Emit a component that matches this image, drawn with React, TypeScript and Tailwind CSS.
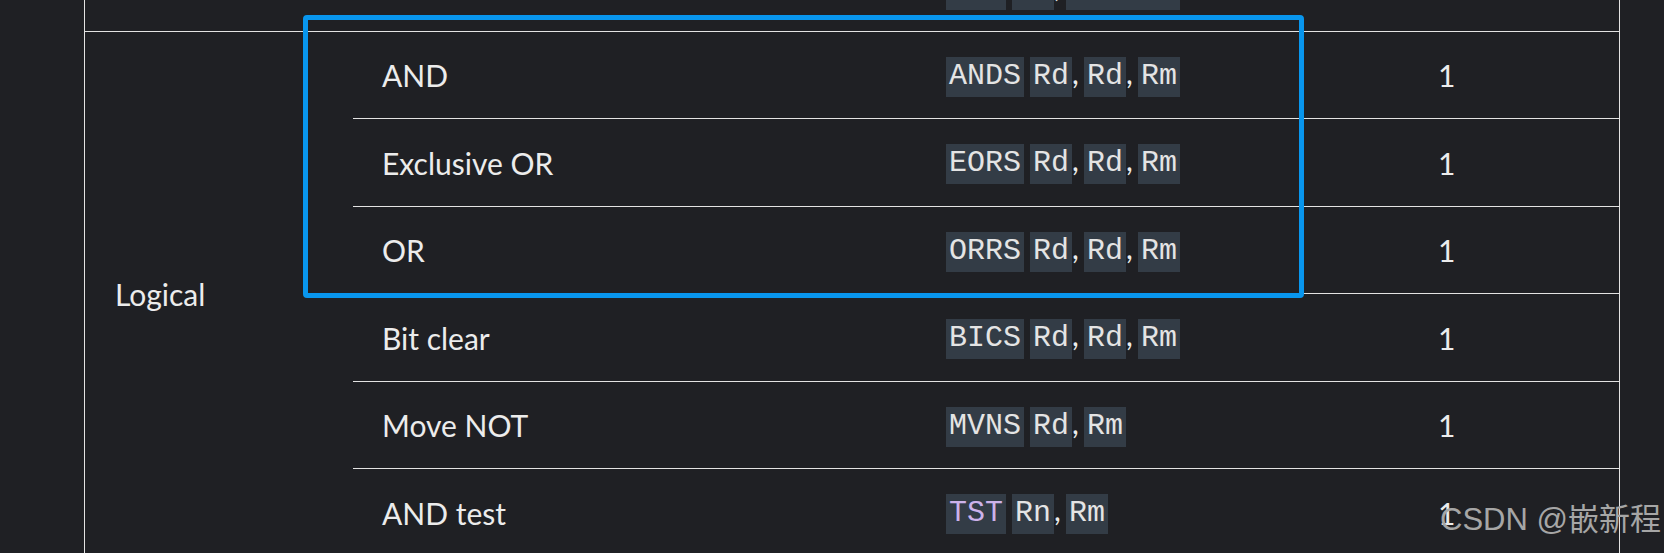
import React from "react";

type Row = { op: string; instr: string; ops: string[]; purple?: boolean; h: string; top: boolean };

const rows: Row[] = [
  { op: "AND", instr: "ANDS", ops: ["Rd", "Rd", "Rm"], h: "h-[86px]", top: false },
  { op: "Exclusive OR", instr: "EORS", ops: ["Rd", "Rd", "Rm"], h: "h-[88px]", top: true },
  { op: "OR", instr: "ORRS", ops: ["Rd", "Rd", "Rm"], h: "h-[87px]", top: true },
  { op: "Bit clear", instr: "BICS", ops: ["Rd", "Rd", "Rm"], h: "h-[88px]", top: true },
  { op: "Move NOT", instr: "MVNS", ops: ["Rd", "Rm"], h: "h-[87px]", top: true },
  { op: "AND test", instr: "TST", ops: ["Rn", "Rm"], purple: true, h: "h-[88px]", top: true },
];

function Code({ children, purple }: { children: React.ReactNode; purple?: boolean }) {
  return (
    <span
      className={
        "inline-block h-[40px] px-[3px] bg-[#333c46] font-['Liberation_Mono',monospace] text-[30px] leading-[38px] " +
        (purple ? "text-[#cdb2ea]" : "text-[#e4e4e4]")
      }
    >
      {children}
    </span>
  );
}

function Instr({ instr, ops, purple }: { instr: string; ops: string[]; purple?: boolean }) {
  return (
    <div className="whitespace-nowrap leading-[36px]">
      <Code purple={purple}>{instr}</Code>
      {ops.map((o, i) => (
        <React.Fragment key={i}>
          {i > 0 ? <span className="inline-block w-[6px]">,</span> : null}
          <span className="inline-block w-[6px]" />
          <Code>{o}</Code>
        </React.Fragment>
      ))}
    </div>
  );
}

export default function App() {
  return (
    <div className="relative w-full h-[553px] overflow-hidden bg-[#1f2024] font-['Lato',sans-serif] text-[30px] text-[#ececec]">
      <div className="ml-[84px] w-[1536px] -mt-[55px] border-l border-r border-[#e3e3e3]">
        {/* previous row, scrolled mostly out of view */}
        <div className="flex h-[86px]">
          <div className="w-[268px]" />
          <div className="w-[564px]" />
          <div className="w-[492px] pl-[29px] flex items-center">
            <Instr instr="SUB" ops={["SP", "#<imm>"]} />
          </div>
          <div className="w-[210px]" />
        </div>
        {/* Logical group */}
        <div className="flex border-t border-[#e3e3e3]">
          <div className="w-[268px] pl-[30px] flex items-center">
            <span className="leading-[36px]">Logical</span>
          </div>
          <div className="flex flex-col w-[1266px]">
            {rows.map((r) => (
              <div
                key={r.op}
                className={"flex " + r.h + (r.top ? " border-t border-[#e3e3e3]" : "")}
              >
                <div className="w-[564px] pl-[29px] flex items-center">
                  <span className="leading-[36px]">{r.op}</span>
                </div>
                <div className="w-[492px] pl-[29px] flex items-center">
                  <Instr instr={r.instr} ops={r.ops} purple={r.purple} />
                </div>
                <div className="w-[210px] pl-[29px] flex items-center">
                  <span className="leading-[36px]">1</span>
                </div>
              </div>
            ))}
          </div>
        </div>
      </div>

      {/* highlight box */}
      <div className="absolute left-[303px] top-[15px] w-[1001px] h-[283px] border-[5px] border-[#0896ee] rounded-[4px]" />

      {/* watermark */}
      <div className="absolute left-[1440px] top-[500px] whitespace-nowrap font-['Liberation_Sans','Noto_Sans_CJK_SC',sans-serif] text-[31px] leading-[40px] text-[#a6a6a6]">
        CSDN @嵌新程
      </div>
    </div>
  );
}
